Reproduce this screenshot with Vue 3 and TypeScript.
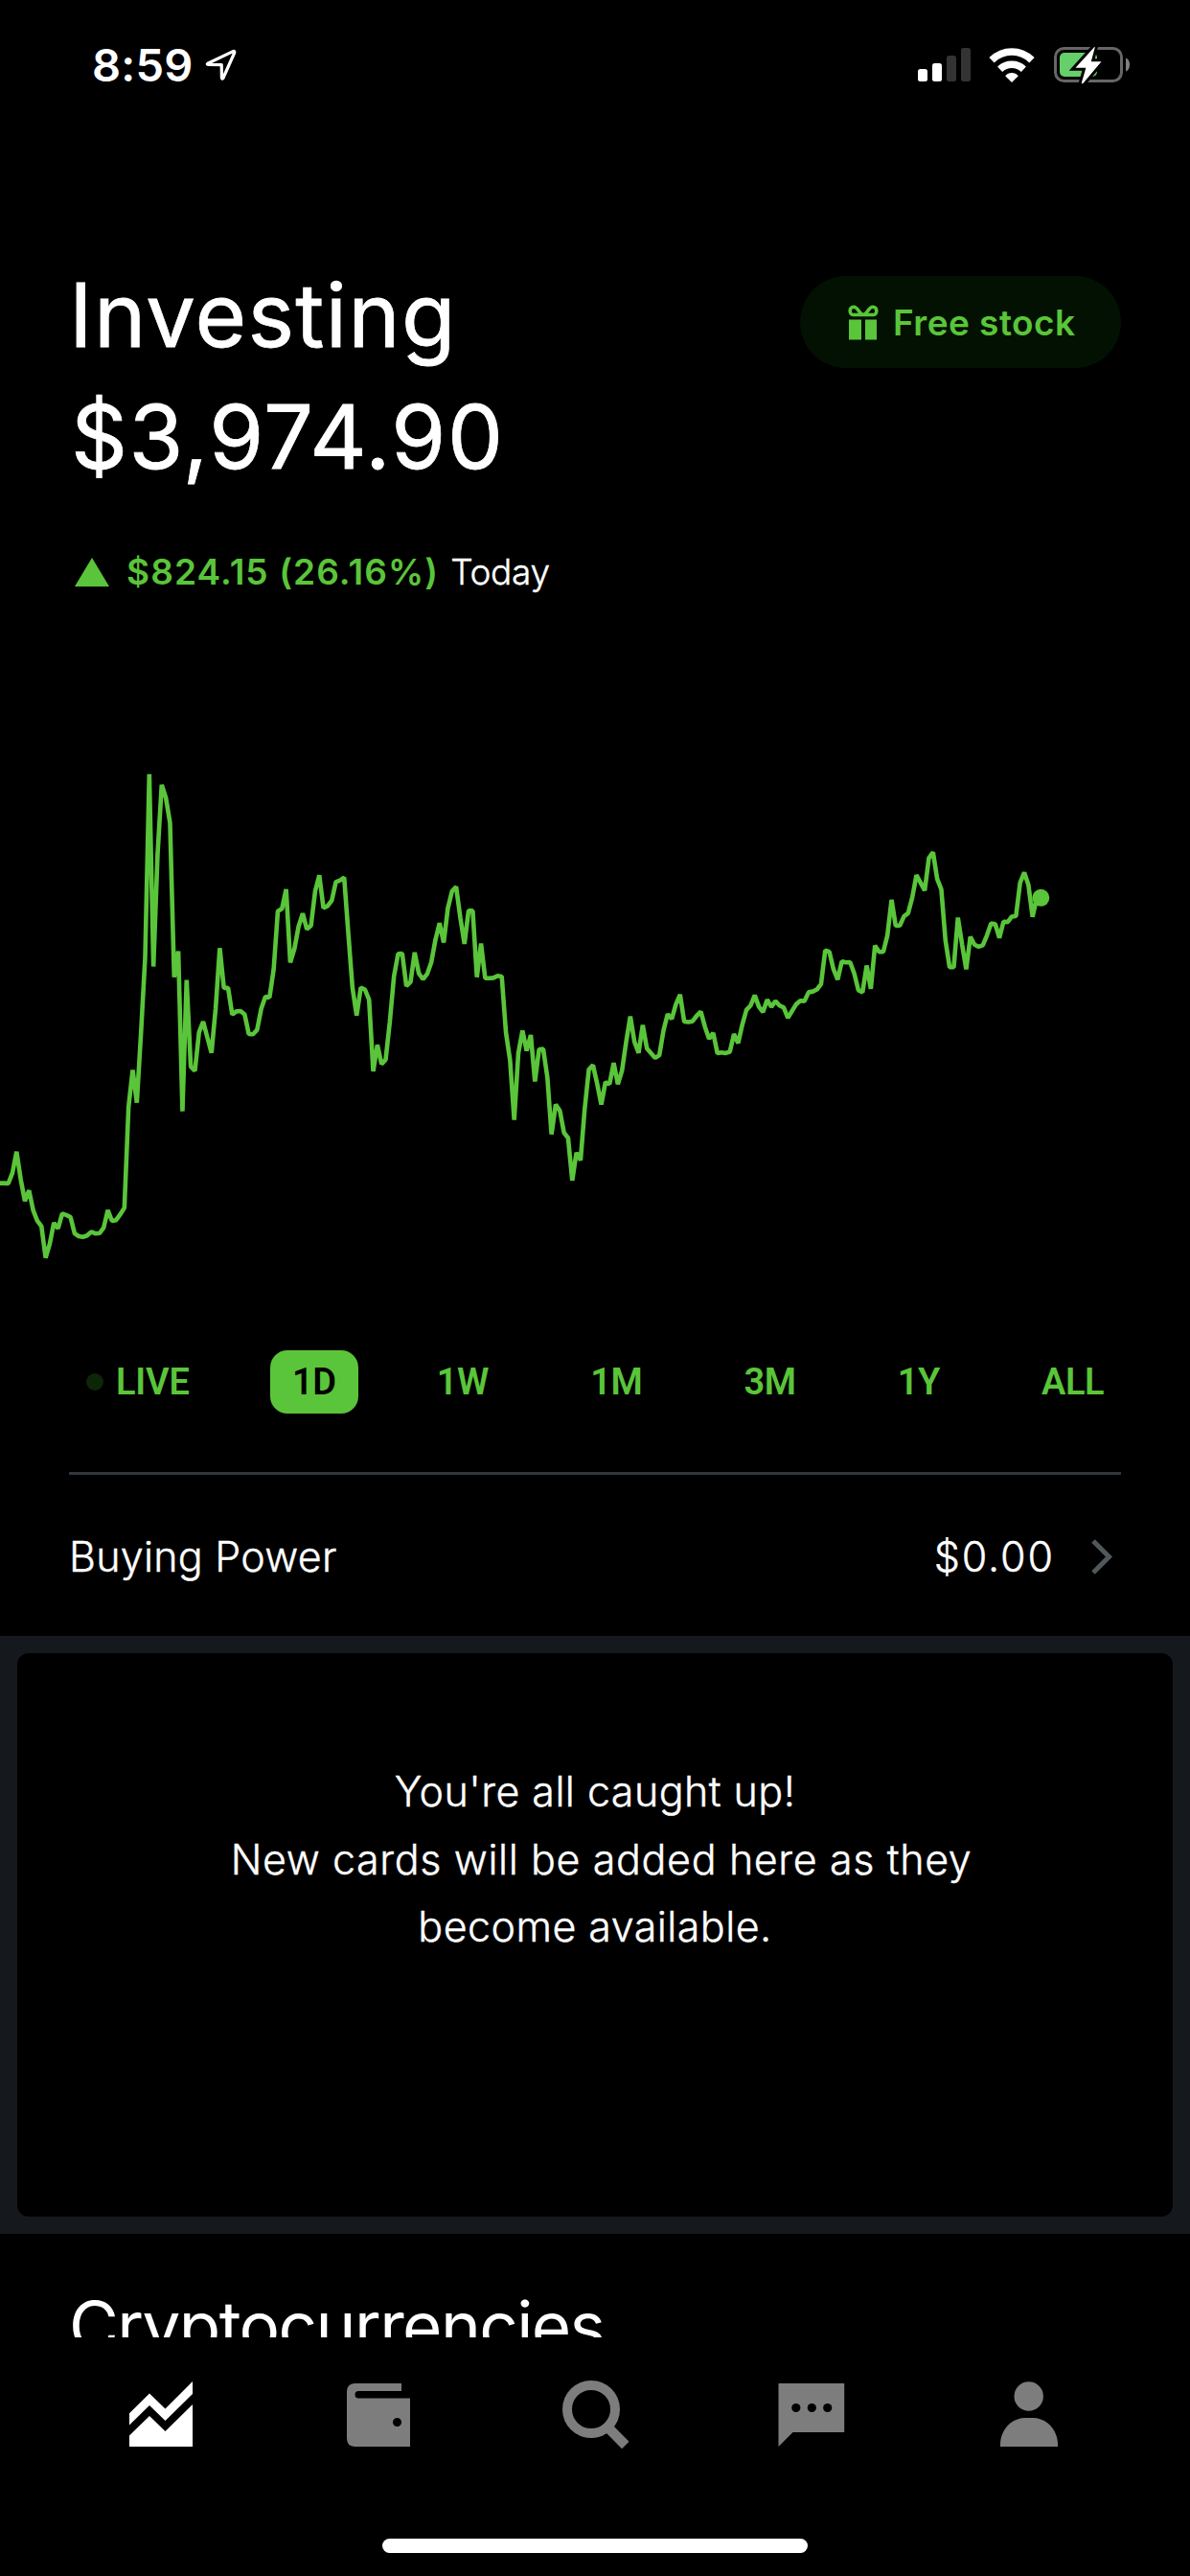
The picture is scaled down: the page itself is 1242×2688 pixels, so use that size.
<script setup lang="ts">
interface Range {
  label: string
  active?: boolean
  live?: boolean
}

const ranges: Range[] = [
  { label: 'LIVE', live: true },
  { label: '1D', active: true },
  { label: '1W' },
  { label: '1M' },
  { label: '3M' },
  { label: '1Y' },
  { label: 'ALL' },
]

// Portfolio samples, measured down from the top of the chart
const samples: number[] = [
  1273, 1273, 1274, 1243, 1181, 1262, 1325, 1294, 1352, 1383, 1399, 1491, 1450, 1389, 1405, 1362,
  1366, 1372, 1420, 1428, 1430, 1426, 1415, 1420, 1419, 1403, 1352, 1383, 1381, 1364, 1345, 1050,
  942, 1038, 835, 614, 78, 640, 312, 109, 147, 220, 671, 595, 1063, 679, 932, 945, 832, 801, 847,
  892, 763, 586, 703, 702, 780, 771, 770, 780, 837, 838, 825, 763, 728, 730, 648, 478, 471, 414,
  628, 588, 523, 485, 531, 520, 420, 373, 469, 463, 447, 393, 388, 380, 544, 702, 783, 702, 707,
  737, 946, 869, 925, 912, 802, 669, 603, 602, 697, 685, 599, 660, 677, 662, 628, 562, 513, 570,
  470, 420, 407, 497, 574, 477, 477, 671, 573, 674, 674, 673, 667, 669, 832, 914, 1088, 893, 827,
  886, 840, 976, 882, 881, 964, 1130, 1043, 1061, 1125, 1141, 1265, 1184, 1206, 1056, 941, 928,
  982, 1043, 978, 983, 922, 984, 944, 860, 786, 860, 892, 811, 879, 893, 907, 899, 827, 779, 793,
  750, 722, 801, 802, 800, 784, 772, 816, 851, 834, 893, 891, 893, 889, 837, 864, 810, 767, 754,
  724, 757, 773, 737, 758, 741, 754, 760, 790, 770, 750, 740, 741, 715, 713, 707, 691, 593, 597,
  648, 678, 625, 628, 627, 660, 709, 715, 637, 705, 579, 597, 597, 549, 445, 521, 520, 493, 484,
  438, 373, 395, 418, 323, 306, 384, 415, 564, 642, 642, 497, 575, 648, 553, 576, 582, 578, 549,
  514, 516, 556, 509, 510, 494, 493, 395, 365, 401, 495, 440, 439,
]

const step = 4.328
const unit = 2.8
const points = samples.map((v, i) => `${(i * step).toFixed(2)},${(v / unit).toFixed(2)}`).join(' ')
const lastX = (samples.length - 1) * step
const lastY = samples[samples.length - 1] / unit
</script>

<template>
  <div class="screen">
    <header class="status">
      <div class="clock">
        <span class="time">8:59</span>
        <svg class="location" width="34" height="34" viewBox="0 0 34 34">
          <path d="M2.8 15.2 L29.2 2.6 Q31.3 2 30.7 4 L18.9 30.5 Q17.7 32.1 17.4 30 L17.2 16.6 L3.4 16.4 Q1.6 16.1 2.8 15.2 Z" fill="none" stroke="#fff" stroke-width="3.2" stroke-linejoin="round" />
        </svg>
      </div>
      <div class="indicators">
        <svg width="55" height="36" viewBox="0 0 55 36">
          <rect x="0" y="22" width="10" height="13" rx="2.5" fill="#fff" />
          <rect x="15" y="16" width="10" height="19" rx="2.5" fill="#fff" />
          <rect x="30" y="8" width="10" height="27" rx="2.5" fill="#333" />
          <rect x="45" y="0" width="10" height="35" rx="2.5" fill="#333" />
        </svg>
        <svg class="wifi" width="48" height="36" viewBox="0 0 48 36">
          <path d="M24 36 L17.2 29.2 Q20 26 24 26 Q28 26 30.8 29.2 Z" fill="#fff" />
          <path d="M11.6 22.2 Q17 17.2 24 17.2 Q31 17.2 36.4 22.2" fill="none" stroke="#fff" stroke-width="7.4" />
          <path d="M3 12.7 Q12 4 24 4 Q36 4 45 12.7" fill="none" stroke="#fff" stroke-width="7.6" />
        </svg>
        <svg class="battery" width="80" height="40" viewBox="0 0 80 40">
          <rect x="1.5" y="2.5" width="69" height="34" rx="9" fill="none" stroke="#666" stroke-width="3" />
          <rect x="6" y="7" width="39" height="25" rx="5" fill="#65cf6a" />
          <path d="M75 12.5 Q79 14 79 19.5 Q79 25 75 26.5 Z" fill="#808080" />
          <path d="M42.5 0.8 L22.5 22.8 L33.4 22.8 L28.8 38.6 Q29.2 39.6 30.6 38.7 L49.5 16.2 L38.8 16.2 L42.8 1.4 Z" fill="#fff" stroke="#000" stroke-width="6" paint-order="stroke" />
        </svg>
      </div>
    </header>

    <section class="summary">
      <div class="balance">
        <h1 class="title">Investing</h1>
        <div class="amount">$3,974.90</div>
        <div class="delta">
          <svg width="36" height="30" viewBox="0 0 36 30"><path d="M18 0 L36 30 H0 Z" fill="#5ac53a" /></svg>
          <span class="gain">$824.15 (26.16%)</span>
          <span class="today">Today</span>
        </div>
      </div>
      <button class="free">
        <svg width="32" height="37" viewBox="0 0 32 37">
          <path d="M5.5 10.5 H26.5 C31 10.5 31 2.2 26 2.2 C21.5 2.2 20 10.3 16 10.3 C12 10.3 10.5 2.2 6 2.2 C1 2.2 1 10.5 5.5 10.5 Z" fill="none" stroke="#5ac53a" stroke-width="3.6" />
          <path d="M1 15.5 H14 V36.5 H1 Z M18 15.5 H30 V36.5 H18 Z" fill="#5ac53a" />
        </svg>
        <span>Free stock</span>
      </button>
    </section>

    <svg class="chart" width="1242" height="560" viewBox="0 0 1242 560">
      <polyline :points="points" fill="none" stroke="#5ac53a" stroke-width="4.6" stroke-linejoin="bevel" />
      <circle :cx="lastX" :cy="lastY" r="9" fill="#5ac53a" />
    </svg>

    <nav class="ranges">
      <button v-for="r in ranges" :key="r.label" class="range" :class="{ active: r.active, live: r.live }">
        <i v-if="r.live" class="dot"></i>{{ r.label }}
      </button>
    </nav>

    <div class="divider"></div>

    <div class="power">
      <span>Buying Power</span>
      <span class="cash">$0.00</span>
      <svg width="23" height="37" viewBox="0 0 23 37"><path d="M2 2 L18.5 18.5 L2 35" fill="none" stroke="#50585c" stroke-width="5" /></svg>
    </div>

    <section class="band">
      <div class="card">
        <div>You're all caught up!</div>
        <div class="long">New cards will be added here as they</div>
        <div>become available.</div>
      </div>
    </section>

    <section class="crypto">
      <h2>Cryptocurrencies</h2>
    </section>

    <footer class="tabs">
      <div class="tab-row">
        <svg width="72" height="72" viewBox="131 2484 72 72" fill="#fff">
          <path d="M134 2518.3 L155 2497.5 L171.5 2513.5 L200 2485 V2498 L171.5 2526 L155 2510 L134 2530.5 Z" />
          <path d="M134 2541.5 L155 2521 L171.5 2537 L200 2509 V2553 H134 Z" />
        </svg>
        <svg width="72" height="72" viewBox="358 2484 72 72" fill="#7d7d7d">
          <path fill-rule="evenodd" d="M369 2487 H418 V2495 H373 Q369.5 2495 369.5 2498.7 Q369.5 2502.5 373 2502.5 H427 V2553 H369 Q361 2552.5 361 2544.5 V2495.5 Q361 2487.5 369 2487 Z M413.5 2523 a4.5 4.5 0 1 0 0.01 0 Z" />
        </svg>
        <svg width="72" height="72" viewBox="585 2484 72 72">
          <circle cx="617" cy="2514" r="25" fill="none" stroke="#7d7d7d" stroke-width="10" />
          <path d="M634 2532.5 L652.8 2551.5" stroke="#7d7d7d" stroke-width="10.5" />
        </svg>
        <svg width="72" height="72" viewBox="810.5 2484 72 72" fill="#7d7d7d">
          <path d="M812 2487 H880.7 V2538 H827 L812 2553 Z" />
          <g fill="#000">
            <circle cx="830.3" cy="2512.5" r="4.6" />
            <circle cx="846.8" cy="2512.5" r="4.6" />
            <circle cx="863.2" cy="2512.5" r="4.6" />
          </g>
        </svg>
        <svg width="72" height="72" viewBox="1036 2484 72 72" fill="#7d7d7d">
          <circle cx="1071.7" cy="2500.5" r="15.2" />
          <path d="M1042 2553 V2551 C1042 2535 1054 2523 1068 2523 H1076 C1090 2523 1102 2535 1102 2551 V2553 Z" />
        </svg>
      </div>
      <div class="home"></div>
    </footer>
  </div>
</template>

<style>
body {
  background: #000;
}
</style>

<style scoped>
.screen {
  width: 1242px;
  height: 2688px;
  overflow: hidden;
  display: flex;
  flex-direction: column;
  background: #000;
  color: #fff;
  font-family: Inter, "Liberation Sans", sans-serif;
}
svg {
  display: block;
  flex: none;
}
button {
  border: 0;
  background: none;
  font-family: inherit;
  margin: 0;
}
h1,
h2 {
  margin: 0;
}
.status {
  height: 136px;
  flex: none;
  display: flex;
  justify-content: space-between;
  align-items: center;
  padding: 0 62px 0 96px;
}
.clock,
.indicators {
  display: flex;
  align-items: center;
}
.time {
  font-size: 47px;
  font-weight: 600;
  line-height: 60px;
  width: 118px;
  letter-spacing: 0.2px;
}
.wifi {
  margin-left: 19px;
}
.battery {
  margin-left: 20px;
}
.summary {
  flex: none;
  display: flex;
  justify-content: space-between;
  align-items: flex-start;
  padding: 129px 72px 0;
}
.title,
.amount {
  font-size: 92px;
  font-weight: 400;
  line-height: 127px;
  -webkit-text-stroke: 0.8px #fff;
}
.title {
  letter-spacing: 1.3px;
}
.amount {
  letter-spacing: 1.5px;
  padding-left: 2px;
}
.delta {
  display: flex;
  align-items: center;
  height: 40px;
  margin-top: 58px;
  padding-left: 6px;
  font-size: 37px;
  line-height: 40px;
  white-space: nowrap;
}
.gain {
  color: #5ac53a;
  font-weight: 600;
  letter-spacing: 1.1px;
  margin-left: 18px;
}
.today {
  font-weight: 300;
  margin-left: 12px;
  letter-spacing: -0.3px;
  -webkit-text-stroke: 0.4px #fff;
}
.free {
  width: 335px;
  height: 96px;
  margin-top: 23px;
  padding: 0 0 0 50px;
  border-radius: 48px;
  background: #031103;
  color: #5ac53a;
  display: flex;
  align-items: center;
  font-size: 37px;
  font-weight: 600;
  letter-spacing: 0.45px;
  white-space: nowrap;
}
.free span {
  margin-left: 15px;
}
.chart {
  margin-top: 163px;
}
.ranges {
  flex: none;
  display: flex;
  justify-content: space-between;
  height: 66px;
  margin-top: 69px;
  padding: 0 67px 0 90px;
}
.range {
  display: flex;
  align-items: center;
  padding: 0 24px;
  border-radius: 18px;
  color: #5ac53a;
  font-family: Roboto, "Liberation Sans", sans-serif;
  font-size: 38px;
  font-weight: 600;
  letter-spacing: -0.5px;
}
.range.live {
  padding: 0 26px 0 0;
  letter-spacing: -0.2px;
}
.range.active {
  padding: 0 23px;
  background: #5ac53a;
  color: #000;
}
.range:last-child {
  padding-right: 23px;
}
.dot {
  width: 18px;
  height: 18px;
  border-radius: 50%;
  background: #0c2607;
  margin-right: 13px;
}
.divider {
  flex: none;
  height: 3px;
  margin: 61px 72px 0;
  background: #30363a;
}
.power {
  flex: none;
  box-sizing: border-box;
  height: 168px;
  display: flex;
  align-items: center;
  padding: 2px 80px 0 72px;
  font-size: 43px;
  font-weight: 300;
  letter-spacing: 0.25px;
  -webkit-text-stroke: 0.4px #fff;
}
.cash {
  margin-left: auto;
  margin-right: 38px;
  letter-spacing: 1.9px;
}
.band {
  flex: none;
  box-sizing: border-box;
  height: 624px;
  padding: 18px;
  background: #15191e;
}
.card {
  box-sizing: border-box;
  height: 588px;
  padding-top: 109px;
  border-radius: 12px;
  background: #000;
  text-align: center;
  font-size: 43px;
  font-weight: 300;
  line-height: 70.5px;
  letter-spacing: 0.45px;
  -webkit-text-stroke: 0.4px #fff;
}
.long {
  padding-left: 13px;
  letter-spacing: 0.62px;
}
.crypto {
  flex: none;
  box-sizing: border-box;
  height: 108px;
  overflow: hidden;
  padding: 52px 72px 0;
}
.crypto h2 {
  font-size: 71px;
  font-weight: 400;
  line-height: 88px;
  letter-spacing: -1.6px;
}
.tabs {
  flex: none;
  height: 249px;
  display: flex;
  flex-direction: column;
  align-items: center;
}
.tab-row {
  width: 1132px;
  height: 72px;
  margin-top: 45px;
  display: grid;
  grid-template-columns: repeat(5, 1fr);
  justify-items: center;
}
.home {
  width: 444px;
  height: 15px;
  margin-top: 93px;
  border-radius: 8px;
  background: #fff;
}
</style>
